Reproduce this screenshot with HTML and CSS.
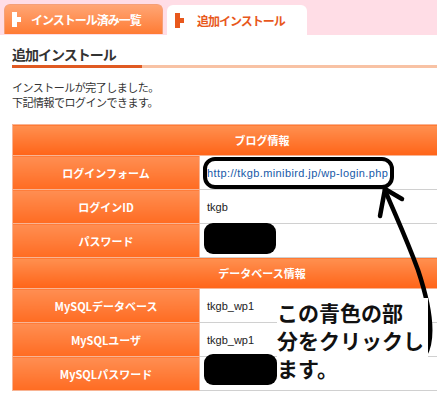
FILE: index.html
```html
<!DOCTYPE html>
<html lang="ja">
<head>
<meta charset="utf-8">
<link rel="stylesheet" href="styles.css">
</head>
<body>
<div class="tabs">
  <div class="tab tab-off">
    <svg class="tab-icon" width="10" height="15" viewBox="0 0 10 15"><path d="M0 0h5v5h4v5h-4v5h-5z" fill="#fff"/></svg>
    <span>インストール済み一覧</span>
  </div>
  <div class="tab tab-on">
    <svg class="tab-icon" width="10" height="15" viewBox="0 0 10 15"><path d="M0 0h5v5h4v5h-4v5h-5z" fill="#E8581C"/></svg>
    <span>追加インストール</span>
  </div>
</div>
<div class="content">
  <h2 class="title">追加インストール</h2>
  <div class="title-line"></div>
  <p class="msg">インストールが完了しました。<br>下記情報でログインできます。</p>
  <table class="info">
    <tr><th colspan="2" class="sect">ブログ情報</th></tr>
    <tr><th class="lbl">ログインフォーム</th><td class="val"><span class="url">http://tkgb.minibird.jp/wp-login.php</span></td></tr>
    <tr><th class="lbl">ログインID</th><td class="val">tkgb</td></tr>
    <tr><th class="lbl">パスワード</th><td class="val"></td></tr>
    <tr><th colspan="2" class="sect">データベース情報</th></tr>
    <tr><th class="lbl">MySQLデータベース</th><td class="val">tkgb_wp1</td></tr>
    <tr><th class="lbl">MySQLユーザ</th><td class="val">tkgb_wp1</td></tr>
    <tr><th class="lbl">MySQLパスワード</th><td class="val"></td></tr>
  </table>
</div>
<svg class="annot" width="437" height="398" viewBox="0 0 437 398">
  <rect x="205" y="159" width="187" height="28" rx="10" fill="none" stroke="#000" stroke-width="4"/>
  <rect x="204" y="223" width="72" height="31" rx="9" fill="#000"/>
  <rect x="204" y="354" width="73" height="31" rx="9" fill="#000"/>
  <path d="M328 374 C370 370 415 368 425 355 C436 335 428 300 418 270 C405 235 393 210 385 190" fill="none" stroke="#000" stroke-width="4.5" stroke-linecap="round"/>
  <path d="M380 216 L385 189 L402 199" fill="none" stroke="#000" stroke-width="4.5" stroke-linecap="round" stroke-linejoin="round"/>
</svg>
<div class="note">この青色の部<br>分をクリックし<br>ます。</div>
</body>
</html>
```
FILE: styles.css
```css
html, body {
  margin: 0;
  padding: 0;
  overflow: hidden;
  background: #fff;
  width: 437px;
  height: 398px;
}
body {
  font-family: "Noto Sans CJK JP", "Noto Sans", sans-serif;
  color: #333;
  position: relative;
}
.tabs {
  display: flex;
  align-items: flex-end;
  gap: 4px;
  height: 35px;
  padding-left: 4px;
  background: #FFDDE6;
  box-sizing: border-box;
}
.tab {
  display: flex;
  align-items: center;
  gap: 9px;
  box-sizing: border-box;
  padding-left: 7px;
  font-size: 12px;
  letter-spacing: -1px;
  font-weight: bold;
  border-radius: 6px 6px 0 0;
}
.tab-off {
  width: 159px;
  height: 30px;
  margin-bottom: 1px;
  color: #fff;
  background: linear-gradient(#FFA675, #FF7B34);
  border: 1px solid #F5A078;
  border-bottom: none;
}
.tab-on {
  width: 140px;
  height: 30px;
  color: #E8581C;
  background: #fff;
  padding-left: 8px;
  gap: 12px;
}
.tab-icon { flex: none; }
.content {
  padding: 0 0 0 12px;
  overflow: hidden;
}
.title {
  margin: 0;
  padding-top: 9px;
  font-size: 14px;
  letter-spacing: -1px;
  line-height: 20px;
  height: 21px;
  font-weight: bold;
  color: #333;
}
.title-line {
  height: 3px;
  background: linear-gradient(to right, #E05A22 130px, #F8C2A4 130px);
}
.msg {
  margin: 12px 0 0;
  font-size: 11px;
  letter-spacing: -0.5px;
  line-height: 15px;
  color: #333;
}
.info {
  margin-top: 14px;
  width: 500px;
  border-collapse: collapse;
  font-size: 11px;
}
.sect {
  height: 30px;
  padding: 0;
  color: #fff;
  font-weight: bold;
  text-align: center;
  background: linear-gradient(#FF9050, #FF6418);
  border: 1px solid #F8B494;
}
.lbl {
  width: 186px;
  height: 33px;
  padding: 0;
  color: #fff;
  font-weight: bold;
  text-align: center;
  background: linear-gradient(#FF8E52, #FF6C22);
  border: 1px solid #F8B494;
}
.val {
  height: 33px;
  padding: 0 0 0 7px;
  color: #222;
  border-bottom: 1px solid #D0D0D0;
  font-family: "Liberation Sans", sans-serif;
  font-size: 11px;
}
.url {
  color: #1659A8;
  letter-spacing: 0.4px;
}
.annot {
  position: absolute;
  left: 0;
  top: 0;
}
.note {
  position: absolute;
  left: 277px;
  top: 298px;
  font-size: 21px;
  line-height: 28px;
  font-weight: bold;
  color: #111;
  background: #fff;
  padding-right: 4px;
}
```
